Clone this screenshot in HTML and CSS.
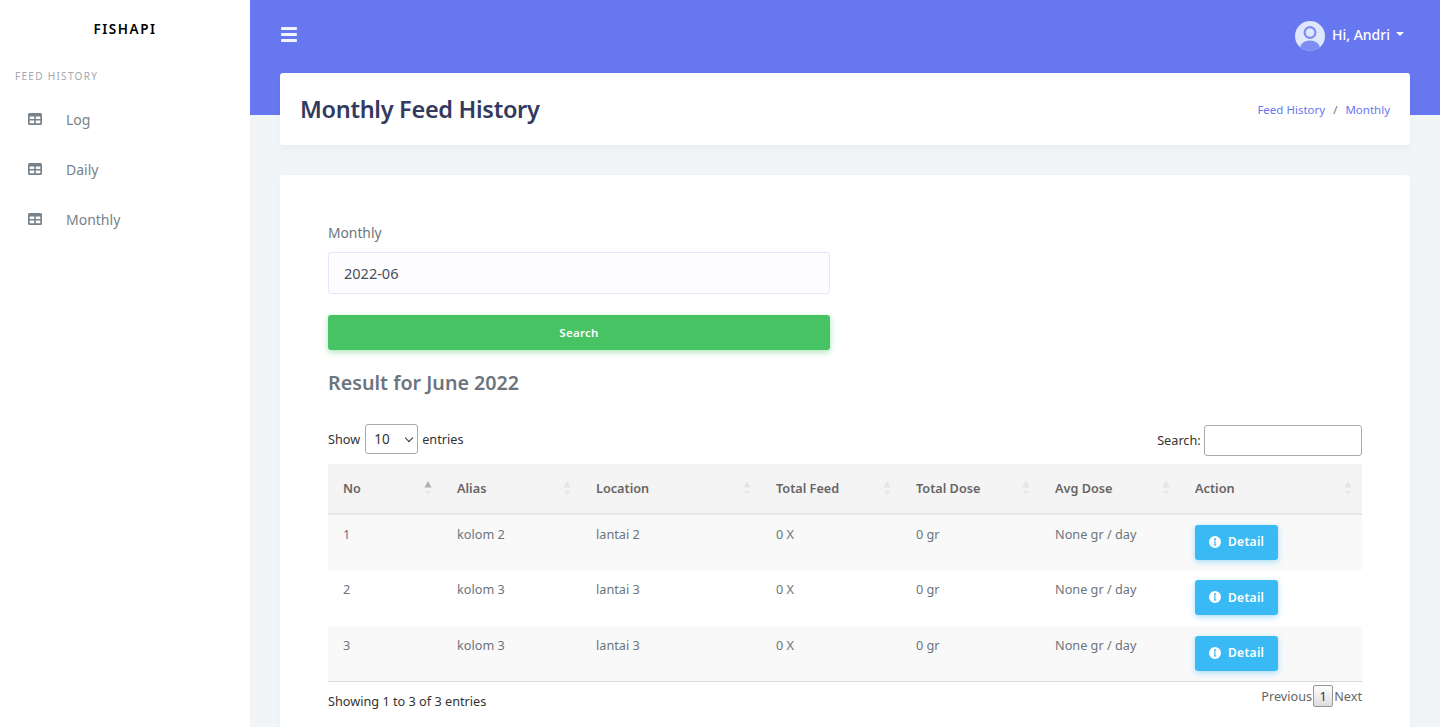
FILE: index.html
```html
<!DOCTYPE html>
<html lang="en">
<head>
    <meta charset="UTF-8">
    <title>Monthly Feed History</title>
    <link rel="stylesheet" href="styles.css">
</head>
<body>
    <svg class="icon-defs" width="0" height="0">
        <symbol id="table-icon" viewBox="0 0 14 12">
            <path fill-rule="evenodd" d="M1.5 0h11A1.5 1.5 0 0 1 14 1.500v9a1.500 1.500 0 0 1-1.500 1.500h-11A1.500 1.500 0 0 1 0 10.500v-9A1.500 1.500 0 0 1 1.500 0zM1.700 3.400v2.700h4.500V3.400zm6.100 0v2.700h4.500V3.400zM1.700 7.400v2.900h4.500V7.400zm6.100 0v2.900h4.500V7.400z"/>
        </symbol>
        <symbol id="info-icon" viewBox="0 0 12 12">
            <path fill-rule="evenodd" d="M6 0a6 6 0 1 1 0 12A6 6 0 0 1 6 0zm0 2.300a1.100 1.100 0 1 0 0 2.200 1.100 1.100 0 0 0 0-2.200zM4.700 5.200v1h.7v2.300h-.7v1h2.600v-1h-.7V5.200z"/>
        </symbol>
        <symbol id="sort-icon" viewBox="0 0 8 16">
            <path class="sort-up" d="M4 0l3.500 6.500h-7z"/>
            <path class="sort-down" d="M4 14L.5 10h7z"/>
        </symbol>
    </svg>

    <div class="layout">
        <aside class="sidebar">
            <div class="brand">FISHAPI</div>
            <div class="menu-header">FEED HISTORY</div>
            <a class="menu-item"><svg class="menu-icon"><use href="#table-icon"/></svg>Log</a>
            <a class="menu-item"><svg class="menu-icon"><use href="#table-icon"/></svg>Daily</a>
            <a class="menu-item"><svg class="menu-icon"><use href="#table-icon"/></svg>Monthly</a>
        </aside>

        <div class="main">
            <div class="navbar-bg"></div>

            <nav class="navbar">
                <div class="hamburger"><span></span><span></span><span></span></div>
                <div class="user">
                    <svg class="avatar" viewBox="0 0 30 30">
                        <defs><clipPath id="avatar-clip"><circle cx="15" cy="15" r="15"/></clipPath></defs>
                        <circle cx="15" cy="15" r="15" fill="#dfe7fd"/>
                        <g clip-path="url(#avatar-clip)">
                            <ellipse cx="15" cy="27" rx="10" ry="7.500" fill="#7d8df3"/>
                            <circle cx="15" cy="11.500" r="6.500" fill="#7d8df3"/>
                            <circle cx="15" cy="11.500" r="4.300" fill="#dfe7fd"/>
                        </g>
                    </svg>
                    <span class="user-name">Hi, Andri</span>
                    <span class="caret"></span>
                </div>
            </nav>

            <div class="content">
                <header class="section-header">
                    <h1>Monthly Feed History</h1>
                    <div class="breadcrumb"><a>Feed History</a><span class="sep">/</span><a>Monthly</a></div>
                </header>

                <section class="card">
                    <form class="filter">
                        <label class="field-label">Monthly</label>
                        <div class="month-input">2022-06</div>
                        <button type="button" class="btn-search">Search</button>
                    </form>

                    <h2 class="result-title">Result for June 2022</h2>

                    <div class="dt-top">
                        <div class="dt-length">Show
                            <span class="select-wrap"><select class="dt-select"><option>10</option></select></span>
                            entries</div>
                        <div class="dt-search">Search: <input type="text" class="dt-input"></div>
                    </div>

                    <table class="dt">
                        <colgroup>
                            <col class="col-no"><col class="col-alias"><col class="col-location">
                            <col class="col-feed"><col class="col-dose"><col class="col-avg"><col class="col-action">
                        </colgroup>
                        <thead>
                            <tr>
                                <th>No<svg class="sort sort-asc"><use href="#sort-icon"/></svg></th>
                                <th>Alias<svg class="sort"><use href="#sort-icon"/></svg></th>
                                <th>Location<svg class="sort"><use href="#sort-icon"/></svg></th>
                                <th>Total Feed<svg class="sort"><use href="#sort-icon"/></svg></th>
                                <th>Total Dose<svg class="sort"><use href="#sort-icon"/></svg></th>
                                <th>Avg Dose<svg class="sort"><use href="#sort-icon"/></svg></th>
                                <th>Action<svg class="sort"><use href="#sort-icon"/></svg></th>
                            </tr>
                        </thead>
                        <tbody>
                            <tr class="odd">
                                <td>1</td><td>kolom 2</td><td>lantai 2</td><td>0 X</td><td>0 gr</td><td>None gr / day</td>
                                <td><a class="btn-detail"><svg class="info"><use href="#info-icon"/></svg>Detail</a></td>
                            </tr>
                            <tr>
                                <td>2</td><td>kolom 3</td><td>lantai 3</td><td>0 X</td><td>0 gr</td><td>None gr / day</td>
                                <td><a class="btn-detail"><svg class="info"><use href="#info-icon"/></svg>Detail</a></td>
                            </tr>
                            <tr class="odd">
                                <td>3</td><td>kolom 3</td><td>lantai 3</td><td>0 X</td><td>0 gr</td><td>None gr / day</td>
                                <td><a class="btn-detail"><svg class="info"><use href="#info-icon"/></svg>Detail</a></td>
                            </tr>
                        </tbody>
                    </table>

                    <div class="dt-bottom">
                        <div class="dt-info">Showing 1 to 3 of 3 entries</div>
                        <div class="dt-paging"><span>Previous</span><span class="page-current">1</span><span>Next</span></div>
                    </div>
                </section>
            </div>
        </div>
    </div>
</body>
</html>
```

FILE: styles.css
```css
* {
    box-sizing: border-box;
}

html, body {
    height: 100%;
}

body {
    margin: 0;
    overflow: hidden;
    font-family: "Noto Sans", "Open Sans", sans-serif;
    font-size: 14px;
    color: #6c757d;
    background-color: #f2f5f8;
}

.icon-defs {
    position: absolute;
}

.layout {
    display: flex;
    min-height: 100%;
}

/* sidebar */
.sidebar {
    flex: 0 0 250px;
    background: white;
    min-height: 727px;
    padding-top: 20px;
}

.brand {
    height: 18px;
    line-height: 18px;
    text-align: center;
    font-size: 13.500px;
    font-weight: 600;
    letter-spacing: 1.550px;
    color: #000;
}

.menu-header {
    margin: 30px 0 0 15px;
    height: 16px;
    line-height: 16px;
    font-size: 10px;
    letter-spacing: 1.300px;
    color: #a1a8ae;
}

.menu-item {
    display: flex;
    align-items: center;
    height: 50px;
    padding-left: 28px;
    font-size: 14px;
    color: #78828a;
}

.sidebar .menu-header + .menu-item {
    margin-top: 10px;
}

.menu-icon {
    width: 14px;
    height: 12px;
    margin: -1px 24px 0 0;
    fill: #78828a;
}

/* top area */
.main {
    flex: 1;
    position: relative;
    min-width: 0;
}

.navbar-bg {
    position: absolute;
    top: 0;
    left: 0;
    right: 0;
    height: 115px;
    background-color: #6777ef;
}

.navbar {
    position: relative;
    display: flex;
    justify-content: space-between;
    align-items: center;
    height: 73px;
    padding: 0 36px 4px 31px;
}

.hamburger {
    display: flex;
    flex-direction: column;
    gap: 3px;
    width: 16px;
}

.hamburger span {
    display: block;
    height: 3px;
    border-radius: 1px;
    background: #f1f3fd;
}

.user {
    display: flex;
    align-items: center;
    color: white;
    font-size: 14px;
    font-weight: 500;
}

.user-name {
    margin-top: -1px;
}

.avatar {
    width: 30px;
    height: 30px;
    margin: 2px 7px 0 0;
}

.caret {
    width: 0;
    height: 0;
    margin-left: 6px;
    margin-bottom: 2px;
    border-top: 4px solid white;
    border-left: 4.500px solid transparent;
    border-right: 4.500px solid transparent;
}

.content {
    position: relative;
    padding: 0 30px;
}

.section-header {
    display: flex;
    justify-content: space-between;
    align-items: center;
    height: 72px;
    padding: 0 20px;
    background: white;
    border-radius: 3px;
    box-shadow: 0 4px 8px rgba(0, 0, 0, 0.03);
}

.section-header h1 {
    margin: 0;
    font-size: 23.500px;
    font-weight: 600;
    letter-spacing: -0.300px;
    color: #34395e;
}

.breadcrumb {
    font-size: 11.500px;
    color: #6c757d;
}

.breadcrumb a {
    color: #6777ef;
}

.breadcrumb .sep {
    margin: 0 8px;
}

/* main card */
.card {
    margin-top: 30px;
    padding: 48px 48px 0;
    height: 560px;
    background: white;
    border-radius: 3px;
    box-shadow: 0 4px 8px rgba(0, 0, 0, 0.03);
}

.filter {
    width: 502px;
}

.field-label {
    display: block;
    height: 20px;
    line-height: 20px;
    font-size: 13.800px;
    color: #6c757d;
}

.month-input {
    height: 42px;
    line-height: 40px;
    margin-top: 9px;
    padding: 0 15px;
    background: #fdfdff;
    border: 1px solid #e4e6fc;
    border-radius: 3px;
    font-size: 14.500px;
    color: #495057;
}

.btn-search {
    display: block;
    width: 100%;
    height: 35px;
    margin-top: 21px;
    padding-bottom: 2px;
    border: none;
    border-radius: 3px;
    background: #47c363;
    box-shadow: 0 2px 6px #a8e4b5;
    color: white;
    font-family: inherit;
    font-size: 11.500px;
    font-weight: 600;
    letter-spacing: 0.300px;
}

.result-title {
    margin: 20px 0 0;
    height: 26px;
    line-height: 26px;
    font-size: 19.700px;
    font-weight: 600;
    color: #6c757d;
}

/* datatable */
.dt-top {
    display: flex;
    justify-content: space-between;
    align-items: center;
    margin-top: 29px;
    height: 31px;
    font-size: 12.700px;
    color: #333;
}

.dt-length {
    display: flex;
    align-items: center;
    gap: 4px;
    margin-top: -3px;
}

.select-wrap {
    position: relative;
    display: block;
    height: 30px;
    margin-left: 1px;
}

.select-wrap::after {
    content: "";
    position: absolute;
    top: 11px;
    right: 6px;
    width: 5px;
    height: 5px;
    border-right: 1px solid #333;
    border-bottom: 1px solid #333;
    transform: rotate(45deg);
}

.dt-select {
    display: block;
    width: 53px;
    height: 30px;
    padding-left: 8px;
    appearance: none;
    background: white;
    border: 1px solid #aaa;
    border-radius: 3px;
    font-family: inherit;
    font-size: 13.500px;
    color: #333;
}

.dt-input {
    width: 158px;
    height: 31px;
    margin-left: 0;
    background: white;
    border: 1px solid #aaa;
    border-radius: 3px;
}

.dt {
    width: 1034px;
    margin-top: 8px;
    border-collapse: collapse;
    table-layout: fixed;
    font-size: 12.700px;
}

.col-no { width: 114px; }
.col-alias { width: 139px; }
.col-location { width: 180px; }
.col-feed { width: 140px; }
.col-dose { width: 139px; }
.col-avg { width: 140px; }
.col-action { width: 182px; }

.dt th {
    position: relative;
    height: 50px;
    padding: 0 15px 2px;
    background: #f4f4f4;
    border-bottom: 2px solid #e6e6e6;
    text-align: left;
    font-weight: 600;
    color: #666;
}

.dt td {
    height: 55.800px;
    padding: 0 15px 16.500px;
    color: #6c757d;
}

.dt td:last-child {
    padding-bottom: 0;
}

.dt tbody tr:last-child {
    border-bottom: 1px solid #d9d9d9;
}

.dt .odd td {
    background: #f9f9f9;
}

.sort {
    position: absolute;
    top: 17px;
    right: 10px;
    width: 8px;
    height: 16px;
    --sort-up: #e4e4e4;
    --sort-down: #e8e8e8;
}

.sort-asc {
    --sort-up: #b0b0b0;
}

.sort-up {
    fill: var(--sort-up);
}

.sort-down {
    fill: var(--sort-down);
}

.btn-detail {
    display: inline-flex;
    align-items: center;
    width: 83px;
    height: 35px;
    padding: 0 0 1px 14px;
    border-radius: 3px;
    background: #3abaf4;
    box-shadow: 0 2px 6px #a6dff9;
    color: white;
    font-size: 12px;
    font-weight: 600;
    letter-spacing: 0.300px;
}

.info {
    width: 12px;
    height: 12px;
    margin-right: 7px;
    fill: white;
}

.dt-bottom {
    display: flex;
    justify-content: space-between;
    font-size: 12.700px;
    color: #333;
}

.dt-info {
    padding-top: 10px;
}

.dt-paging {
    display: flex;
    align-items: center;
    height: 22px;
    margin-top: 3px;
    color: #666;
}

.page-current {
    width: 20px;
    height: 22px;
    margin: 0 1px;
    line-height: 20px;
    text-align: center;
    background: linear-gradient(#fff, #dcdcdc);
    border: 1px solid #979797;
    border-radius: 2px;
    color: #333;
}
```
